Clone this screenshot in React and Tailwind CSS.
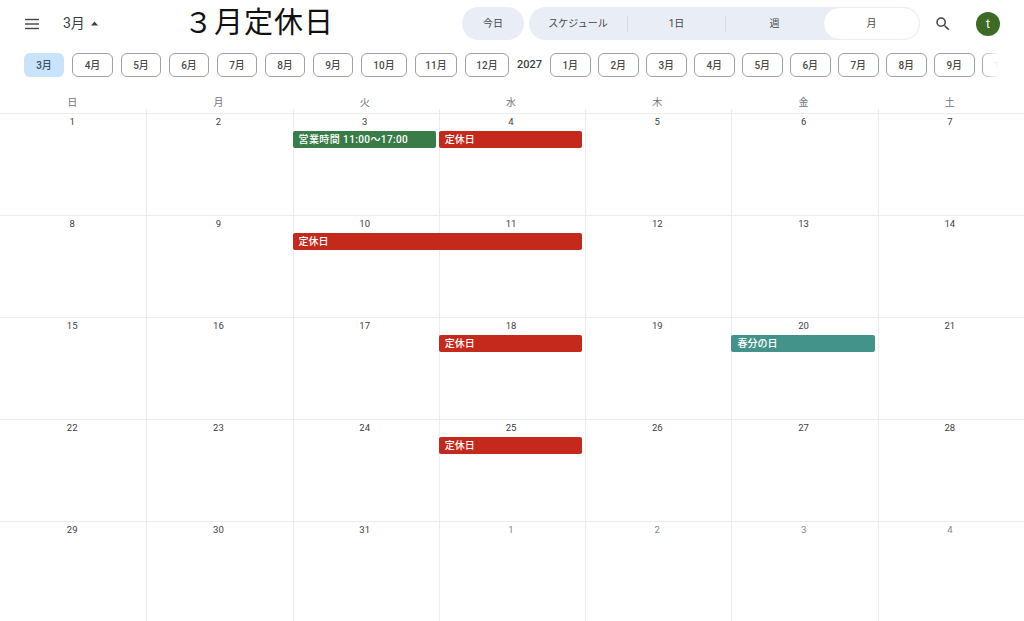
const FONT = "font-['Roboto','Noto_Sans_CJK_JP',sans-serif]"

const chips = [
    ["3月", "w-10"], ["4月", "w-[41px]"], ["5月", "w-10"], ["6月", "w-10"], ["7月", "w-10"], ["8月", "w-10"], ["9月", "w-10"],
    ["10月", "w-[46px]"], ["11月", "w-[42px]"], ["12月", "w-11"],
]
const chips2027 = ["1月", "2月", "3月", "4月", "5月", "6月", "7月", "8月", "9月"]

const weekdays = ["日", "月", "火", "水", "木", "金", "土"]

const RED = "bg-[#c5291c]"
const GREEN = "bg-[#3a7c48]"
const TEAL = "bg-[#43938a]"

const weeks = [
    { days: [1, 2, 3, 4, 5, 6, 7], events: [
        { title: "営業時間 11:00～17:00", color: GREEN, col: "col-start-3", wide: true },
        { title: "定休日", color: RED, col: "col-start-4" },
    ] },
    { days: [8, 9, 10, 11, 12, 13, 14], events: [
        { title: "定休日", color: RED, col: "col-start-3 col-span-2" },
    ] },
    { days: [15, 16, 17, 18, 19, 20, 21], events: [
        { title: "定休日", color: RED, col: "col-start-4" },
        { title: "春分の日", color: TEAL, col: "col-start-6" },
    ] },
    { days: [22, 23, 24, 25, 26, 27, 28], events: [
        { title: "定休日", color: RED, col: "col-start-4" },
    ] },
    { days: [29, 30, 31, 1, 2, 3, 4], events: [] },
]

function Chip({ label, width, active }) {
    return (
        <div className={`${width} h-6 shrink-0 rounded-md flex items-center justify-center text-[10px] font-medium ${active ? "bg-[#c9e3fa] text-[#3c4f66]" : "border border-[#a0a0a0] text-[#4a4a4a]"}`}>
            {label}
        </div>
    )
}

function ColumnLines() {
    return (
        <div className="absolute inset-0 grid grid-cols-7">
            {weekdays.map((d, i) => (
                <div key={d} className={i === 0 ? "" : "border-l border-[#ececec]"} />
            ))}
        </div>
    )
}

function Week({ week, index }) {
    return (
        <div className="relative h-[102px] border-t border-[#ececec]">
            <ColumnLines />
            <div className="relative grid grid-cols-7 pt-[1px]">
                {week.days.map((day, i) => (
                    <div key={i} className={`h-[13px] pr-[2px] text-center text-[9.5px] leading-[13px] ${index === 4 && i > 2 ? "text-[#80868b]" : "text-[#3c4043]"}`}>
                        {day}
                    </div>
                ))}
            </div>
            <div className="relative grid grid-cols-7 mt-[3px]">
                {week.events.map((e) => (
                    <div key={e.title + e.col} className={`${e.col} row-start-1 ${e.color} h-[17px] mr-[3px] rounded-[2px] pl-[6px] flex items-center text-white text-[10px] font-medium whitespace-nowrap overflow-hidden ${e.wide ? "tracking-[0.4px]" : ""}`}>
                        {e.title}
                    </div>
                ))}
            </div>
        </div>
    )
}

export default function App() {
    return (
        <div className={`${FONT} w-[1024px] h-[621px] overflow-hidden bg-white`}>
            {/* top bar */}
            <div className="h-[46px] flex items-center pt-[1px]">
                <svg className="ml-[24px] w-4 h-4 text-[#444746]" viewBox="0 0 16 16" fill="currentColor">
                    <rect x="1" y="2.8" width="14" height="1.4" />
                    <rect x="1" y="7.3" width="14" height="1.4" />
                    <rect x="1" y="11.8" width="14" height="1.4" />
                </svg>
                <div className="ml-[23px] w-[121px] flex items-center gap-[5px] text-[14px] text-[#3c4043]">
                    3月
                    <svg className="w-[9px] h-[5px]" viewBox="0 0 9 5" fill="currentColor">
                        <path d="M4.5 0.5 8 4.5H1z" />
                    </svg>
                </div>
                <h1 className="w-[278px] text-[29px] font-normal text-[#111] tracking-[1px] whitespace-nowrap">３月定休日</h1>
                <div className="w-[62px] h-[33px] rounded-full bg-[#e9eef6] flex items-center justify-center text-[10px] text-[#444746]">今日</div>
                <div className="ml-[5px] w-[391px] h-[33px] rounded-full bg-[#e9eef6] flex items-center text-[10px] text-[#444746]">
                    <div className="w-[99px] h-4 flex items-center justify-center border-r border-[#d5d9e0]">スケジュール</div>
                    <div className="w-[98px] h-4 flex items-center justify-center border-r border-[#d5d9e0]">1日</div>
                    <div className="w-[97px] flex items-center justify-center">週</div>
                    <div className="w-[97px] h-[33px] rounded-full bg-white border border-[#e9eef6] flex items-center justify-center">月</div>
                </div>
                {/* search */}
                <svg className="ml-[14px] w-[18px] h-[18px] text-[#444746]" viewBox="0 0 24 24" fill="currentColor">
                    <path d="M15.5 14h-.79l-.28-.27A6.47 6.47 0 0 0 16 9.5 6.5 6.5 0 1 0 9.5 16c1.61 0 3.09-.59 4.23-1.57l.27.28v.79l5 4.99L20.49 19l-4.99-5zm-6 0C7.01 14 5 11.99 5 9.5S7.01 5 9.5 5 14 7.01 14 9.5 11.99 14 9.5 14z" />
                </svg>
                <div className="ml-[24px] w-6 h-6 rounded-full bg-[#3d6a24] flex items-center justify-center text-white text-[12px]">t</div>
            </div>

            {/* month chips */}
            <div className="ml-6 mt-[7px] w-[974px] h-6 flex items-center gap-2 overflow-hidden relative">
                {chips.map(([label, width], i) => (
                    <Chip key={label} label={label} width={width} active={i === 0} />
                ))}
                <span className="w-[25px] shrink-0 text-[11px] font-medium text-[#3c4043]">2027</span>
                <div className="flex items-center gap-[7.5px]">
                    {chips2027.map((label) => (
                        <Chip key={label} label={label} width="w-[40.5px]" />
                    ))}
                    <Chip label="10月" width="w-[46px]" />
                </div>
                <div className="absolute right-0 top-0 h-6 w-[17px] bg-gradient-to-r from-white/0 to-white" />
            </div>

            {/* weekday header */}
            <div className="mt-[19px] h-[13px] grid grid-cols-7">
                {weekdays.map((d) => (
                    <div key={d} className="pr-[2px] text-center text-[10px] leading-[13px] text-[#70757a]">{d}</div>
                ))}
            </div>
            <div className="relative h-[4px]">
                <ColumnLines />
            </div>

            {weeks.map((week, i) => (
                <Week key={i} week={week} index={i} />
            ))}
        </div>
    )
}
